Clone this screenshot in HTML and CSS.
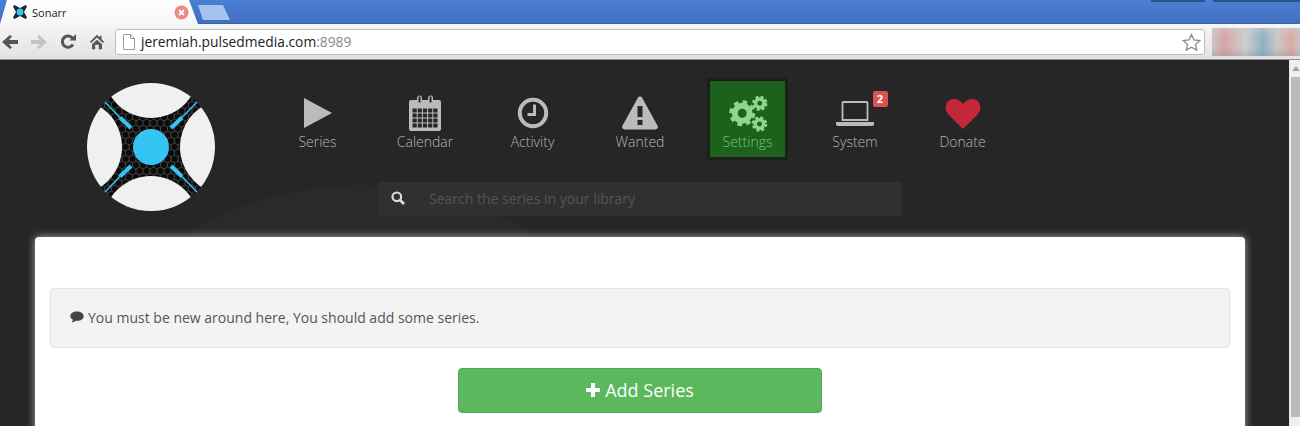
FILE: index.html
```html
<!DOCTYPE html>
<html>
<head>
    <meta charset="utf-8"/>
    <title>Sonarr</title>
    <link rel="stylesheet" href="styles.css">
</head>
<body>
<div class="tabStrip">
    <div class="tab">
        <svg class="favicon" width="16" height="16" viewBox="0 0 16 16">
            <path d="M1 2.500 2.500 1 8 4 13.500 1 15 2.500 12 8 15 13.500 13.500 15 8 12 2.500 15 1 13.500 4 8Z" fill="#1c2a30"/>
            <circle cx="8" cy="8" r="3.400" fill="#35c5f4"/>
        </svg>
        <span class="tabTitle">Sonarr</span>
        <svg class="tabClose" width="15" height="15" viewBox="0 0 15 15">
            <circle cx="7.500" cy="7.500" r="7" fill="#e98a85"/>
            <path d="M5 5l5 5M10 5l-5 5" stroke="#fff" stroke-width="1.800"/>
        </svg>
    </div>
    <div class="newTab"></div>
    <div class="winButtons">
        <span class="winBtn winBtn-min"></span>
        <span class="winBtn winBtn-close"></span>
    </div>
</div>

<div class="toolbar">
    <svg class="toolIcon" viewBox="0 0 20 18">
        <path d="M18 7H9l3-3.500L10 2 2 9l8 7 2-1.500L9 11h9Z" fill="#555"/>
    </svg>
    <svg class="toolIcon" viewBox="0 0 20 18">
        <path d="M2 7h9L8 3.500 10 2l8 7-8 7-2-1.500 3-3.500H2Z" fill="#c4c4c4"/>
    </svg>
    <svg class="toolIcon" viewBox="0 0 18 18">
        <path d="M14 11.500A5.700 5.700 0 1 1 13.500 5" fill="none" stroke="#555" stroke-width="3"/>
        <path d="M10.500 7.500H17V1Z" fill="#555"/>
    </svg>
    <svg class="toolIcon" viewBox="-1 -1 20 20">
        <path d="M9 1 1 9l1.500 1L9 4l6.500 6L17 9l-3-3V2h-2v2ZM3.500 11.500 9 6.500l5.500 5V17H11v-5H7v5H3.500Z" fill="#555"/>
    </svg>
    <div class="addressBar">
        <svg class="pageIcon" width="14" height="16" viewBox="0 0 14 16">
            <path d="M1.500.5h7l4 4v11h-11Z M8.500.5v4h4" fill="#fff" stroke="#999"/>
        </svg>
        <span class="url">jeremiah.pulsedmedia.com<span class="urlPort">:8989</span></span>
        <svg class="star" width="19" height="18" viewBox="0 0 19 18">
            <path d="M9.500 1.500 12 6.800l5.800.7-4.300 3.900 1.200 5.700-5.200-2.900-5.200 2.900 1.200-5.700L1.200 7.500 7 6.800Z" fill="#fff" stroke="#8c8c8c" stroke-width="1.300"/>
        </svg>
    </div>
    <div class="blurredBox"></div>
</div>

<div class="viewport">
    <div class="page">
        <div class="swirl"></div>
        <div class="header">
            <svg class="logo" width="128" height="128" viewBox="0 0 128 128">
                <defs>
                    <pattern id="hex" width="7" height="12" patternUnits="userSpaceOnUse">
                        <path d="M0 2 3.500 0 7 2V6L3.500 8 0 6ZM3.500 8V12" fill="none" stroke="#5a5a5a" stroke-width=".7"/>
                    </pattern>
                    <clipPath id="logoClip"><circle cx="64" cy="64" r="64"/></clipPath>
                </defs>
                <circle cx="64" cy="64" r="64" fill="#0c0c0c"/>
                <circle cx="64" cy="64" r="64" fill="url(#hex)"/>
                <g clip-path="url(#logoClip)" fill="#f0f0f0">
                    <circle cx="64" cy="-13" r="48"/>
                    <circle cx="64" cy="141" r="48"/>
                    <circle cx="-13" cy="64" r="48"/>
                    <circle cx="141" cy="64" r="48"/>
                </g>
                <circle cx="64" cy="64" r="18" fill="#35c5f4"/>
                <g stroke="#35c5f4">
                    <path d="M44 45 33 34.500M84 45 95 34.500M44 83 33 93.500M84 83 95 93.500" stroke-width="4"/>
                    <path d="M33 34.500 18 19M95 34.500 110 19M33 93.500 18 109M95 93.500 110 109" stroke-width="1.500"/>
                </g>
            </svg>
            <div class="headerRight">
                <ul class="nav">
                    <li class="navItem">
                        <svg class="navIcon" width="40" height="38" viewBox="0 0 40 38">
                            <path d="M6 3 34 18 6 33Z" fill="#bbb"/>
                        </svg>
                        <span>Series</span>
                    </li>
                    <li class="navItem">
                        <svg class="navIcon" width="40" height="38" viewBox="0 0 40 38">
                            <g transform="translate(0 1)">
                                <path d="M6 4h6V2a2.500 2.500 0 0 1 5 0v2h6V2a2.500 2.500 0 0 1 5 0v2h6a2 2 0 0 1 2 2v27a2 2 0 0 1-2 2H6a2 2 0 0 1-2-2V6a2 2 0 0 1 2-2Z" fill="#bbb"/>
                                <path d="M13.500.5h2v6h-2ZM24.500.5h2v6h-2Z" fill="#272727"/>
                                <path d="M7 12h26v20H7Z" fill="#272727"/>
                                <path d="M7 12h26M7 17h26M7 22h26M7 27h26M7 32h26M7 12v20M12.200 12v20M17.400 12v20M22.600 12v20M27.800 12v20M33 12v20" stroke="#bbb" stroke-width="1"/>
                            </g>
                        </svg>
                        <span>Calendar</span>
                    </li>
                    <li class="navItem">
                        <svg class="navIcon" width="40" height="38" viewBox="0 0 40 38">
                            <circle cx="20" cy="18" r="13.200" fill="none" stroke="#bbb" stroke-width="4"/>
                            <path d="M21.500 9.500v10h-7" fill="none" stroke="#bbb" stroke-width="3"/>
                        </svg>
                        <span>Activity</span>
                    </li>
                    <li class="navItem">
                        <svg class="navIcon" width="40" height="38" viewBox="0 0 40 38">
                            <path d="M18 2.500a2.500 2.500 0 0 1 4 0L37.700 31a2.500 2.500 0 0 1-2.200 3.500h-31A2.500 2.500 0 0 1 2.300 31Z" fill="#bbb"/>
                            <path d="M17.500 11h5v11h-5ZM17.500 25h5v5h-5Z" fill="#272727"/>
                        </svg>
                        <span>Wanted</span>
                    </li>
                    <li class="navItem navItem-active">
                        <svg class="navIcon" width="40" height="38" viewBox="0 0 40 38">
                            <g fill="none" stroke="#8fd68f">
                                <circle cx="14.200" cy="18.300" r="7.500" stroke-width="6"/>
                                <circle cx="14.200" cy="18.300" r="11" stroke-width="4" stroke-dasharray="4.500 4.140"/>
                                <circle cx="31.800" cy="8.300" r="4.200" stroke-width="3.500"/>
                                <circle cx="31.800" cy="8.300" r="6.200" stroke-width="3" stroke-dasharray="2.800 2.070"/>
                                <circle cx="31.500" cy="29" r="4.200" stroke-width="3.500"/>
                                <circle cx="31.500" cy="29" r="6.200" stroke-width="3" stroke-dasharray="2.800 2.070"/>
                            </g>
                        </svg>
                        <span>Settings</span>
                    </li>
                    <li class="navItem">
                        <svg class="navIcon" width="40" height="38" viewBox="0 0 40 38">
                            <path d="M8.500 7h23a1 1 0 0 1 1 1V25h-25V8a1 1 0 0 1 1-1Z" fill="none" stroke="#bbb" stroke-width="1.800"/>
                            <path d="M1 27h38v2a2 2 0 0 1-2 2H3a2 2 0 0 1-2-2Z" fill="#bbb"/>
                        </svg>
                        <span class="navBadge">2</span>
                        <span>System</span>
                    </li>
                    <li class="navItem">
                        <svg class="navIcon" width="40" height="38" viewBox="0 0 40 38">
                            <path d="M20 34 5 19C0 13 3 4 11 4c4 0 7 2 9 5 2-3 5-5 9-5 8 0 11 9 6 15Z" fill="#c4273a"/>
                        </svg>
                        <span>Donate</span>
                    </li>
                </ul>
                <div class="searchBox">
                    <svg width="14" height="14" viewBox="0 0 14 14">
                        <circle cx="5.800" cy="5.800" r="4.300" fill="none" stroke="#ddd" stroke-width="2.200"/>
                        <path d="M9 9l4 4" stroke="#ddd" stroke-width="2.600"/>
                    </svg>
                    <span class="searchHint">Search the series in your library</span>
                </div>
            </div>
        </div>
        <div class="card">
            <div class="alert">
                <svg class="alertIcon" width="14" height="12" viewBox="0 0 14 12">
                    <path d="M7 .5c3.700 0 6.700 2.100 6.700 4.700S10.700 9.900 7 9.900c-.5 0-1 0-1.500-.1C4.500 10.800 3 11.400 1.500 11.500c.8-.8 1.300-1.700 1.400-2.800C1.300 7.800.3 6.600.3 5.200.3 2.600 3.300.5 7 .5Z" fill="#444"/>
                </svg>
                You must be new around here, You should add some series.
            </div>
            <div class="btnRow">
                <div class="addBtn">
                    <svg width="14" height="14" viewBox="0 0 14 14"><path d="M5 0h4v5h5v4H9v5H5V9H0V5h5Z" fill="#fff"/></svg>
                    Add Series
                </div>
            </div>
        </div>
    </div>
    <div class="scrollbar">
        <span class="scrollArrow"></span>
        <span class="scrollThumb"></span>
    </div>
</div>
</body>
</html>
```

FILE: styles.css
```css
* {
    margin: 0;
    padding: 0;
    box-sizing: border-box;
}

html, body {
    height: 426px;
    overflow: hidden;
}

body {
    font-family: "Open Sans", "Liberation Sans", sans-serif;
    font-size: 14px;
    background: #272727;
}

ul li {
    list-style: none;
}

/* browser tabs */
.tabStrip {
    display: flex;
    height: 24px;
    background: linear-gradient(#4a7fd6, #4370c0);
    border-bottom: 1px solid #3a62a8;
}

.tab {
    display: flex;
    align-items: center;
    width: 198px;
    height: 24px;
    padding: 0 9px 0 12px;
    background: linear-gradient(#fff, #f6f6f6);
    clip-path: polygon(0 100%, 7px 0, 189px 0, 198px 100%);
}

.tabTitle {
    margin-left: 4px;
    font-size: 11px;
    color: #222;
    flex: 1;
}

.newTab {
    width: 32px;
    height: 15px;
    margin-top: 5px;
    background: #a4c4ef;
    clip-path: polygon(0 0, 25px 0, 32px 100%, 5px 100%);
}

.winButtons {
    display: flex;
    margin-left: auto;
    height: 2px;
}

.winBtn {
    display: block;
    height: 2px;
    background: #2f5288;
}

.winBtn-min {
    width: 54px;
    margin-right: 8px;
}

.winBtn-close {
    width: 87px;
}

/* browser toolbar */
.toolbar {
    display: flex;
    align-items: center;
    height: 36px;
    background: linear-gradient(#f5f5f5, #e2e2e2);
    border-bottom: 1px solid #8d8d8d;
}

.toolIcon {
    flex: none;
    width: 20px;
    height: 18px;
    margin-right: 9px;
}

.addressBar {
    display: flex;
    align-items: center;
    width: 1091px;
    height: 26px;
    margin-left: -1px;
    padding: 0 3px 0 6px;
    background: #fff;
    border: 1px solid #bdbdbd;
    border-radius: 3px;
}

.pageIcon {
    flex: none;
}

.url {
    flex: 1;
    margin-left: 5px;
    font-size: 13.800px;
    color: #222;
}

.urlPort {
    color: #888;
}

.blurredBox {
    flex: none;
    width: 88px;
    height: 28px;
    margin-left: 7px;
    background:
        linear-gradient(rgba(205, 205, 210, .5), transparent 30%, transparent 70%, rgba(130, 130, 140, .3)),
        linear-gradient(90deg, #c9c4c6 0, #d8a4a4 14%, #cfcfcf 38%, #8fb1c4 58%, #c9c9c9 74%, #dda9a1 90%, #c9c4c6 100%);
}

/* page */
.viewport {
    display: flex;
    height: 366px;
}

.page {
    position: relative;
    flex: 1;
    overflow: hidden;
    padding-top: 18px;
    background: #262626;
}

.swirl {
    position: absolute;
    left: 30px;
    top: 125px;
    width: 660px;
    height: 660px;
    border-radius: 50%;
    background: #2a2a2a;
}

.header {
    position: relative;
    display: flex;
    padding-left: 87px;
}

.logo {
    flex: none;
    margin: 5px 62px 0 0;
}

.nav {
    display: flex;
    gap: 26.500px;
}

.navItem {
    position: relative;
    display: flex;
    flex-direction: column;
    align-items: center;
    width: 81px;
    height: 82px;
    padding-top: 14px;
    border: 3px solid transparent;
    color: #b5b5b5;
    font-weight: 300;
}

.navItem-active {
    background: #1c621c;
    border-color: #1c1f1c;
    color: #74c474;
}

.navBadge {
    position: absolute;
    top: 10px;
    right: 5px;
    width: 15px;
    height: 16px;
    border-radius: 2px;
    background: #d9534f;
    color: #fff;
    font-size: 11px;
    font-weight: 700;
    line-height: 16px;
    text-align: center;
}

.navIcon {
    flex: none;
    margin-bottom: -1px;
}

.searchBox {
    position: relative;
    display: flex;
    align-items: center;
    width: 524px;
    height: 34px;
    margin: 22px 0 0 101px;
    padding: 0 0 2px 13px;
    background: #303030;
    border-radius: 4px;
}

.searchHint {
    margin-left: 24px;
    color: #555;
}

.card {
    position: relative;
    width: 1210px;
    height: 300px;
    margin: 21px 0 0 35px;
    padding: 51px 15px 0;
    background: #fff;
    border-radius: 4px;
    box-shadow: 0 0 8px rgba(255, 255, 255, .6);
}

.alert {
    display: flex;
    align-items: center;
    gap: 4px;
    height: 60px;
    padding: 0 19px 2px;
    background: #f3f3f3;
    border: 1px solid #e3e3e3;
    border-radius: 4px;
    color: #555;
}

.btnRow {
    display: flex;
    justify-content: center;
    margin-top: 20px;
}

.addBtn {
    display: flex;
    align-items: center;
    justify-content: center;
    gap: 5px;
    width: 364px;
    height: 45px;
    padding-bottom: 2px;
    background: #5cb85c;
    border: 1px solid #4cae4c;
    border-radius: 4px;
    color: #fff;
    font-size: 18px;
}

/* scrollbar */
.scrollbar {
    flex: none;
    width: 11px;
    background: #f0f0f0;
    border-left: 1px solid #e4e4e4;
}

.scrollArrow {
    display: block;
    width: 0;
    margin: 6px 0 0 2px;
    border: 4px solid transparent;
    border-top: 0;
    border-bottom: 5px solid #a3a3a3;
}

.scrollThumb {
    display: block;
    height: 340px;
    margin: 6px 0 0 1px;
    background: #bbb;
}
```
